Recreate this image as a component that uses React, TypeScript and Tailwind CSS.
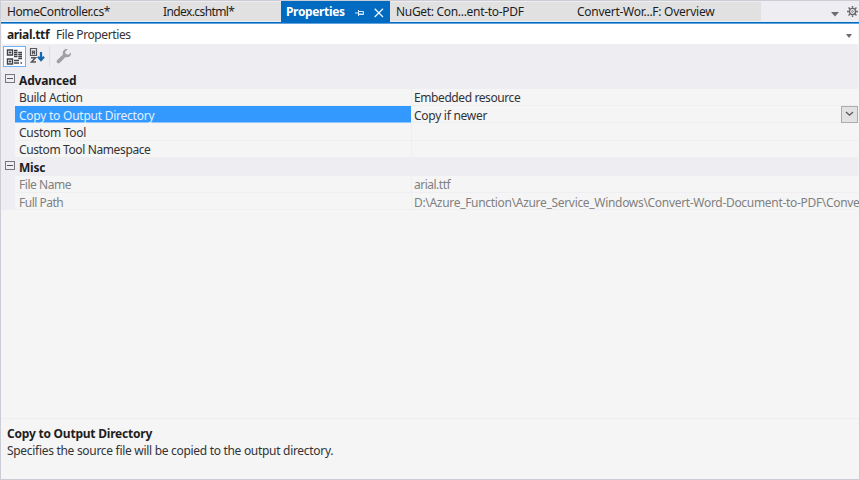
import type { ReactNode } from "react";

function Text({ children, className = "" }: { children: ReactNode; className?: string }) {
  return <span className={`inline-block whitespace-pre ${className}`}>{children}</span>;
}

function Expander() {
  return (
    <svg width="10" height="10" viewBox="0 0 10 10" className="ml-1 mt-[2px] shrink-0" fill="none">
      <rect x="0.5" y="0.5" width="9" height="8" stroke="#77777b" />
      <path d="M2 4.5H8" stroke="#55555a" />
    </svg>
  );
}

function Category({ name, tracking }: { name: string; tracking: string }) {
  return (
    <div className="flex h-[17.5px] bg-[#ededf2] pt-[0.5px] font-bold text-[#1c1c1e]">
      <div className="w-[18px]"><Expander /></div>
      <Text className={tracking}>{name}</Text>
    </div>
  );
}

type RowProps = { name: string; value?: string; nameTracking: string; valueTracking?: string; selected?: boolean; muted?: boolean };

function Row({ name, value = "", nameTracking, valueTracking = "", selected, muted }: RowProps) {
  return (
    <div className={`flex h-[17.4px] ${muted ? "text-[#808080]" : "text-[#333336]"}`}>
      <div className="w-[14px] shrink-0 bg-[#ededf2]" />
      <div className={`w-[396px] shrink-0 border-b pl-1 pt-[0.7px] ${selected ? "border-[#8fc6ff] bg-[#3399ff] text-[#e4f1ff]" : "border-[#efeff1]"}`}>
        <Text className={nameTracking}>{name}</Text>
      </div>
      <div className="flex min-w-0 grow border-b border-l border-[#efeff1] pl-[2px]">
        <Text className={`mt-[0.7px] grow ${valueTracking}`}>{value}</Text>
        {selected && (
          <div className="flex h-[17px] w-[17px] shrink-0 items-center justify-center border border-[#acacac] bg-[#e2e2e2]">
            <svg width="9" height="6" viewBox="0 0 9 6" fill="none"><path d="M1 1L4.5 4.3L8 1" stroke="#555" strokeWidth="1.2" /></svg>
          </div>
        )}
      </div>
    </div>
  );
}

export default function App() {
  return (
    <div className="flex h-[480px] w-[860px] flex-col overflow-hidden border border-[#cccdd4] bg-[#f5f5f5] font-['Noto_Sans','Open_Sans',sans-serif] text-[12px] leading-[17px] text-[#1e1e1e]">
      <div className="flex h-[21px] shrink-0 bg-[#eeeef2]">
        <div className="flex w-[280px] border-y border-[#eeeef2] bg-[#e1e1e1] pl-[6px] pt-px">
          <Text className="w-[156px] tracking-[-0.39px]">HomeController.cs*</Text>
          <Text className="tracking-[-0.6px]">Index.cshtml*</Text>
        </div>
        <div className="flex w-[109px] bg-[#006bc0] pl-[5px] pt-[2px] font-bold text-white">
          <Text className="w-[69px] tracking-[-0.35px]">Properties</Text>
          <svg width="10" height="10" viewBox="0 0 10 10" className="mt-[5px]" fill="none" stroke="#d8ebfa">
            <path d="M0 5H3M3.5 2V8M4 3.5H8.5V6.5H4M4 6H8" />
          </svg>
          <svg width="10" height="10" viewBox="0 0 10 10" className="ml-[9px] mt-[5px]" fill="none" stroke="#eaf5ff" strokeWidth="1.3">
            <path d="M.7.7L9 9M9 .7L.7 9" />
          </svg>
        </div>
        <div className="flex w-[371px] border-y border-[#eeeef2] bg-[#e1e1e1] pl-[6px] pt-px">
          <Text className="w-[181px] tracking-[-0.31px]">NuGet: Con...ent-to-PDF</Text>
          <Text className="tracking-[-0.27px]">Convert-Wor...F: Overview</Text>
        </div>
        <svg width="8" height="5" viewBox="0 0 8 5" className="ml-[70px] mt-[11px]"><path d="M0 0H8L4 4.5Z" fill="#6b6b70" /></svg>
        <svg width="11" height="11" viewBox="0 0 12 12" className="ml-[8px] mt-[5px] shrink-0" fill="none" stroke="#68686c">
          <circle cx="6" cy="6" r="3.4" strokeWidth="1.6" />
          <circle cx="6" cy="6" r="1" strokeWidth=".8" />
          <path d="M6 0V2M6 10V12M0 6H2M10 6H12M1.7 1.7L3.2 3.2M8.8 8.8L10.3 10.3M1.7 10.3L3.2 8.8M8.8 3.2L10.3 1.7" strokeWidth="1.6" />
        </svg>
      </div>
      <div className="h-[2px] shrink-0 border-b border-b-[#5fa3de] bg-[#006bc0]" />
      <div className="mx-px flex h-[20px] shrink-0 bg-white pl-[5px] pt-[2px]">
        <Text className="w-[49px] font-bold tracking-[-0.35px]">arial.ttf</Text>
        <Text className="tracking-[-0.4px] text-[#333336]">File Properties</Text>
        <svg width="6" height="4" viewBox="0 0 6 4" className="ml-auto mr-[6px] mt-[8px]"><path d="M0 0H6L3 4Z" fill="#6b6b70" /></svg>
      </div>
      <div className="mx-px flex h-[27px] shrink-0 items-start bg-[#ededf2] pl-px pt-[2px]">
        <div className="flex h-[21px] w-[23px] items-center justify-center border border-[#72b2ef] bg-[#fbfcff]">
          <svg width="17" height="16" viewBox="0 0 17 16" fill="none" stroke="#424246">
            <path d="M1.5 1H6.5V6H1.5ZM1.5 10H6.5V15H1.5Z" strokeWidth="1.4" />
            <path d="M4 2.2V4.8M2.7 3.5H5.3M4 11.2V13.8M2.7 12.5H5.3" />
            <path d="M8 1.5H11.5M8 3.5H11.5M8 5.5H11.5M8 7.5H11.5M12.3 3.5H16M12.3 5.5H16M12.3 7.5H16M12.3 9.5H16M8 11.5H13M8 14H13M14.5 14H16" strokeWidth="1.3" />
          </svg>
        </div>
        <svg width="18" height="17" viewBox="0 0 18 17" className="ml-[3px] mt-[2px]" fill="none">
          <path d="M1.5 .5H7.5V7.5H1.5ZM3.5 6.5V3H5.5V6.5M3.5 4.7H5.5" stroke="#57575b" strokeWidth="1.2" />
          <path d="M2 9.8H6.5L2.5 14H7" stroke="#57575b" strokeWidth="1.5" />
          <path d="M12 4V12M9 8.7L12 12L15 8.7" stroke="#1767ac" strokeWidth="2.2" />
        </svg>
        <div className="ml-[2px] h-[21px] w-px bg-[#dedee3]" />
        <svg width="16" height="16" viewBox="0 0 16 16" className="ml-[6px] mt-[2px]">
          <path d="M10.5 1C7.5 1 6.1 4 7 6.5L1 12.3C-.2 14 1.7 16.2 3.7 14.9L9.5 9C12.5 10 15.4 7.8 15 4.6L12.3 6.8L9.8 6.1L9.1 3.7L12 1Z" fill="#a0a0a3" />
        </svg>
      </div>
      <div className="mr-px flex h-[140px] shrink-0 flex-col">
        <Category name="Advanced" tracking="tracking-[-0.15px]" />
        <Row name="Build Action" value="Embedded resource" nameTracking="tracking-[-0.33px]" valueTracking="tracking-[-0.41px]" />
        <Row name="Copy to Output Directory" value="Copy if newer" nameTracking="tracking-[-0.24px]" valueTracking="tracking-[-0.27px]" selected />
        <Row name="Custom Tool" nameTracking="tracking-[-0.27px]" />
        <Row name="Custom Tool Namespace" nameTracking="tracking-[-0.38px]" />
        <Category name="Misc" tracking="tracking-[-0.2px]" />
        <Row name="File Name" value="arial.ttf" nameTracking="tracking-[-0.45px]" valueTracking="tracking-[-0.5px]" muted />
        <Row name="Full Path" value="D:\Azure_Function\Azure_Service_Windows\Convert-Word-Document-to-PDF\Conve" nameTracking="tracking-[-0.5px]" valueTracking="tracking-[-0.31px]" muted />
      </div>
      <div className="h-[208px] shrink-0 border-b border-[#eeeeef]" />
      <div className="flex flex-col pl-[6px] pt-[6px]">
        <Text className="font-bold tracking-[-0.22px]">Copy to Output Directory</Text>
        <Text className="tracking-[-0.3px] text-[#333336]">Specifies the source file will be copied to the output directory.</Text>
      </div>
    </div>
  );
}
